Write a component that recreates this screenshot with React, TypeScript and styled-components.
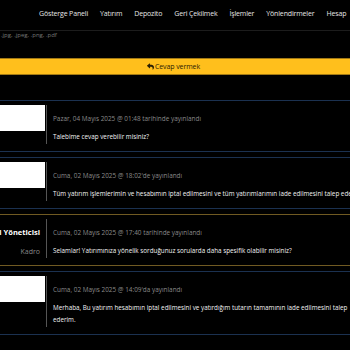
import styled, { createGlobalStyle } from 'styled-components'
import { FaReply } from 'react-icons/fa'

const GlobalStyle = createGlobalStyle`
  html, body {
    margin: 0;
    padding: 0;
    background: #000;
    overflow: hidden;
  }
  body {
    font-family: 'Open Sans', 'Liberation Sans', sans-serif;
  }
`

type Reply = {
  staff?: boolean
  name?: string
  date: string
  text: string
  spaced?: boolean
}

const replies: Reply[] = [
  {
    date: 'Pazar, 04 Mayıs 2025 @ 01:48 tarihinde yayınlandı',
    text: 'Talebime cevap verebilir misiniz?',
  },
  {
    date: "Cuma, 02 Mayıs 2025 @ 18:02'de yayınlandı",
    text: 'Tüm yatırım işlemlerimin ve hesabımın iptal edilmesini ve tüm yatırımlarımın iade edilmesini talep ederim.',
  },
  {
    staff: true,
    name: 'Müşteri Yöneticisi',
    date: 'Cuma, 02 Mayıs 2025 @ 17:40 tarihinde yayınlandı',
    text: 'Selamlar! Yatırımınıza yönelik sorduğunuz sorularda daha spesifik olabilir misiniz?',
  },
  {
    date: "Cuma, 02 Mayıs 2025 @ 14:09'da yayınlandı",
    text: 'Merhaba, Bu yatırım hesabımın iptal edilmesini ve yatırdığım tutarın tamamının iade edilmesini talep ederim.',
  },
  {
    staff: true,
    spaced: true,
    name: 'Müşteri Yöneticisi',
    date: 'Cuma, 02 Mayıs 2025 @ 12:30 tarihinde yayınlandı',
    text: 'Merhaba, talebiniz ilgili birime iletilmiştir.',
  },
]

const navItems = [
  'Gösterge Paneli',
  'Yatırım',
  'Depozito',
  'Geri Çekilmek',
  'İşlemler',
  'Yönlendirmeler',
  'Hesap',
]

const App = () => {
  return (
    <Page>
      <GlobalStyle />
      <Nav>
        {navItems.map((item) => (
          <NavLink key={item}>{item}</NavLink>
        ))}
      </Nav>
      <FileHint>.jpg, .jpeg, .png, .pdf</FileHint>
      <ReplyButton>
        <FaReply size={7} />
        Cevap vermek
      </ReplyButton>
      <Thread>
        {replies.map((r, i) => (
          <Post key={i} staff={r.staff} spaced={r.spaced}>
            <Author>
              {r.staff ? (
                <StaffInfo>
                  <StaffName>{r.name}</StaffName>
                  <StaffRole>Kadro</StaffRole>
                </StaffInfo>
              ) : (
                <Redacted />
              )}
            </Author>
            <Body>
              <Meta>{r.date}</Meta>
              <Message>{r.text}</Message>
            </Body>
          </Post>
        ))}
      </Thread>
    </Page>
  )
}

const Page = styled.div`
  width: 369px;
  color: #eee;
`

const Nav = styled.nav`
  height: 26px;
  padding: 0 0 4px 39px;
  display: flex;
  align-items: center;
  gap: 12px;
  border-bottom: 1px solid #1c1c1c;
  white-space: nowrap;
`

const NavLink = styled.a`
  font-size: 7px;
  color: #e6e6e6;
  letter-spacing: -0.15px;
`

const FileHint = styled.div`
  font-size: 6px;
  line-height: 8px;
  color: #777;
  padding-left: 1px;
`

const ReplyButton = styled.button`
  display: flex;
  width: 100%;
  height: 17px;
  margin-top: 19px;
  align-items: center;
  justify-content: center;
  gap: 1px;
  padding: 0 22px 0 0;
  background: #ffbf1c;
  border: none;
  border-top: 1px solid #a37a14;
  border-bottom: 1px solid #a37a14;
  color: #2a2004;
  font-family: 'Open Sans', 'Liberation Sans', sans-serif;
  font-size: 7px;
  letter-spacing: -0.1px;
`

const Thread = styled.div`
  margin-top: 25px;
  display: flex;
  flex-direction: column;
  gap: 5px;
`

const Post = styled.div<{ staff?: boolean; spaced?: boolean }>`
  display: flex;
  padding: 4px 0 6px;
  border-top: 1px solid ${({ staff }) => (staff ? '#705a22' : '#1b3150')};
  border-bottom: 1px solid ${({ staff }) => (staff ? '#705a22' : '#1b3150')};
  margin-top: ${({ spaced }) => (spaced ? '11px' : '0')};
`

const Author = styled.div`
  width: 46px;
  flex-shrink: 0;
  display: flex;
  justify-content: flex-end;
  overflow: hidden;
  border-right: 1px solid #555;
  margin-bottom: 1px;
`

const Redacted = styled.div`
  width: 45px;
  height: 26px;
  margin-right: 1px;
  background: #fff;
  flex-shrink: 0;
`

const StaffInfo = styled.div`
  display: flex;
  flex-direction: column;
  align-items: flex-end;
  padding: 7px 6px 0 0;
  white-space: nowrap;
`

const StaffName = styled.div`
  font-size: 7.5px;
  font-weight: 700;
  line-height: 12px;
  color: #fff;
`

const StaffRole = styled.div`
  font-size: 7px;
  line-height: 12px;
  margin-top: 8px;
  color: #888;
`

const Body = styled.div`
  flex: 1;
  padding: 8px 0 2px 6px;
`

const Meta = styled.div`
  font-size: 6.4px;
  line-height: 12px;
  color: #8a8a8a;
  margin-bottom: 6px;
`

const Message = styled.div`
  font-size: 6.3px;
  line-height: 12px;
  color: #f2f2f2;
`

export default App
